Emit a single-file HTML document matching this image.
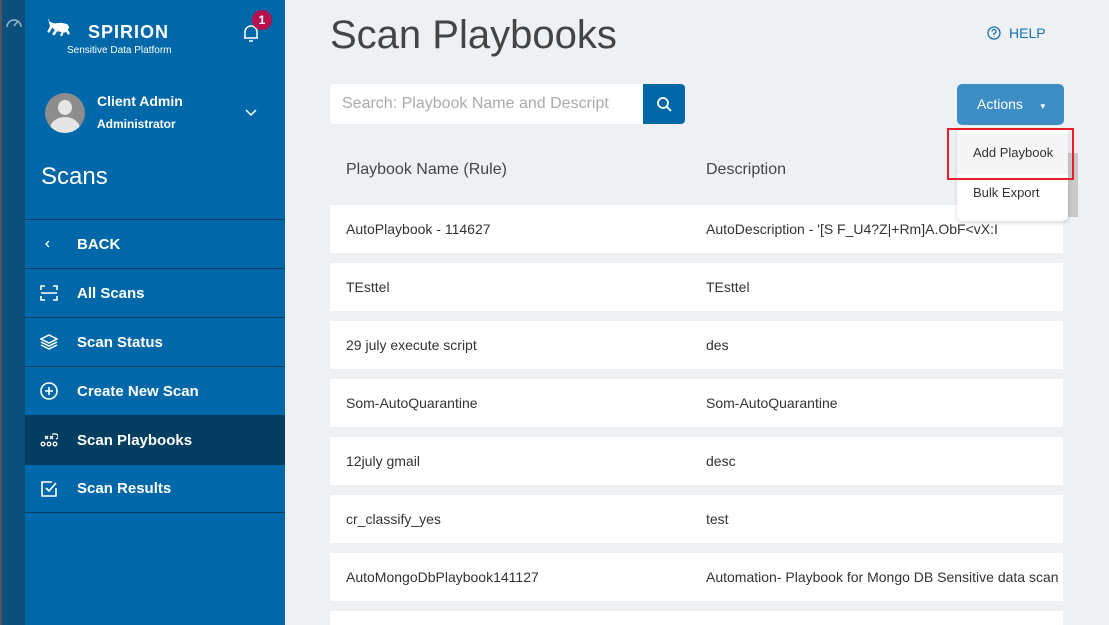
<!DOCTYPE html>
<html style="width:1109px;height:625px;overflow:hidden"><head><style>
*{margin:0;padding:0;box-sizing:border-box}
body{width:1109px;height:625px;overflow:hidden;background:#eef1f4;font-family:"Liberation Sans",sans-serif;position:relative}
.strip{position:absolute;left:0;top:0;width:25px;height:625px;background:#0c4f7c;border-left:2px solid #555}
.side{position:absolute;left:25px;top:0;width:260px;height:625px;background:#0068a9;color:#fff}
.nav{position:absolute;left:0;width:260px;height:49px;border-top:1px solid #0a3f63;display:flex;align-items:center;font-size:15px;font-weight:bold}
.nav svg{position:absolute;left:15px}
.nav span{position:absolute;left:52px}
.row{position:absolute;left:330px;width:733px;height:48px;background:#fff;font-size:14px;color:#333;line-height:48px}
.row .a{position:absolute;left:16px}.row .b{position:absolute;left:376px;white-space:nowrap}
</style></head><body>
<div class="strip"><svg width="20" height="14" style="position:absolute;left:2px;top:15px" viewBox="0 0 20 14" fill="none" stroke="#9fb7c8" stroke-width="1.5"><path d="M3 12a7 7 0 1 1 14 0"/><path d="M10 11l4-5"/></svg></div>
<div class="side">
 <svg width="40" height="30" style="position:absolute;left:20px;top:12px" viewBox="0 0 56 30" fill="#fff"><path d="M4 2l3 6 6 2 10-1 8 2 3 4-2 4 3 5-3 2-2-4-4 1-2 5-3-1 2-5-6-1-4 6-3-2 4-6-4-3-4 7-3-1 4-8z"/></svg>
 <div style="position:absolute;left:63px;top:22px;font-size:18px;font-weight:bold;letter-spacing:1px">SPIRION</div>
 <div style="position:absolute;left:42px;top:45px;font-size:10px">Sensitive Data Platform</div>
 <svg width="18" height="20" style="position:absolute;left:217px;top:23px" viewBox="0 0 18 20" fill="none" stroke="#fff" stroke-width="1.5"><path d="M3 15V9a6 6 0 0 1 12 0v6H2h14M7 18h4"/></svg>
 <div style="position:absolute;left:227px;top:10px;width:20px;height:20px;border-radius:50%;background:#b5124d;font-size:12px;font-weight:bold;text-align:center;line-height:20px">1</div>
 <div style="position:absolute;left:20px;top:93px;width:40px;height:40px;border-radius:50%;background:#8d8d8d;overflow:hidden"><div style="position:absolute;left:13px;top:7px;width:14px;height:15px;border-radius:50%;background:#e6e6e6"></div><div style="position:absolute;left:5px;top:24px;width:30px;height:24px;border-radius:50%;background:#e6e6e6"></div></div>
 <div style="position:absolute;left:72px;top:93px;font-size:14px;font-weight:bold">Client Admin</div>
 <div style="position:absolute;left:72px;top:117px;font-size:12px;font-weight:bold">Administrator</div>
 <svg width="12" height="8" style="position:absolute;left:220px;top:109px" viewBox="0 0 12 8" fill="none" stroke="#fff" stroke-width="1.5"><path d="M1 1l5 5 5-5"/></svg>
 <div style="position:absolute;left:16px;top:163px;font-size:24px">Scans</div>
 <div class="nav" style="top:219px"><svg width="10" height="10" style="left:18px" viewBox="0 0 10 10" fill="none" stroke="#fff" stroke-width="1.3"><path d="M6 2L3 5l3 3"/></svg><span>BACK</span></div>
 <div class="nav" style="top:268px"><svg width="18" height="16" viewBox="0 0 18 16" fill="none" stroke="#fff" stroke-width="1.6"><path d="M1 5V1h4M13 1h4v4M1 11v4h4M13 15h4v-4M1 8h16"/></svg><span>All Scans</span></div>
 <div class="nav" style="top:317px"><svg width="18" height="16" viewBox="0 0 18 16" fill="none" stroke="#fff" stroke-width="1.5"><path d="M9 1l8 4-8 4-8-4zM1 8l8 4 8-4M1 11l8 4 8-4"/></svg><span>Scan Status</span></div>
 <div class="nav" style="top:366px"><svg width="18" height="18" viewBox="0 0 18 18" fill="none" stroke="#fff" stroke-width="1.6"><circle cx="9" cy="9" r="8"/><path d="M9 5v8M5 9h8"/></svg><span>Create New Scan</span></div>
 <div class="nav" style="top:415px;background:#033d60"><svg width="18" height="14" viewBox="0 0 18 14" fill="none" stroke="#fff" stroke-width="1.3"><circle cx="3" cy="11" r="1.8"/><circle cx="9" cy="11" r="1.8"/><circle cx="15" cy="11" r="1.8"/><path d="M5 3l3 3M8 3L5 6M10 3l3 3M13 3l-3 3M12 1h3a2 2 0 0 1 1 5"/></svg><span>Scan Playbooks</span></div>
 <div class="nav" style="top:464px;border-bottom:1px solid #0a3f63"><svg width="18" height="18" viewBox="0 0 18 18" fill="none" stroke="#fff" stroke-width="1.6"><path d="M16 8v8H2V2h10"/><path d="M6 8l3 3 7-8"/></svg><span>Scan Results</span></div>
</div>
<div style="position:absolute;left:330px;top:13px;font-size:40px;color:#444">Scan Playbooks</div>
<svg width="14" height="14" style="position:absolute;left:987px;top:26px" viewBox="0 0 14 14" fill="none" stroke="#1a6fb0" stroke-width="1.3"><circle cx="7" cy="7" r="6"/><path d="M5 5.5a2 2 0 1 1 2 2v1.5M7 10.5v.5"/></svg>
<div style="position:absolute;left:1009px;top:25px;font-size:14px;color:#1a6fb0">HELP</div>
<div style="position:absolute;left:330px;top:84px;width:313px;height:40px;background:#fff;border-radius:4px 0 0 4px;font-size:16px;color:#aaa;line-height:40px;padding-left:12px;white-space:nowrap;overflow:hidden">Search: Playbook Name and Descript</div>
<div style="position:absolute;left:643px;top:84px;width:42px;height:40px;background:#0068a9;border-radius:0 4px 4px 0"><svg width="16" height="16" style="position:absolute;left:13px;top:12px" viewBox="0 0 16 16" fill="none" stroke="#fff" stroke-width="1.8"><circle cx="7" cy="7" r="5"/><path d="M11 11l4 4"/></svg></div>
<div style="position:absolute;left:957px;top:84px;width:107px;height:41px;background:#3d8ec4;border-radius:5px;color:#fff;font-size:14px;line-height:41px;padding-left:20px">Actions <span style="font-size:8px;margin-left:12px">▼</span></div>
<div style="position:absolute;left:346px;top:161px;font-size:16px;color:#444">Playbook Name (Rule)</div>
<div style="position:absolute;left:706px;top:161px;font-size:16px;color:#444">Description</div>
<div class="row" style="top:205px"><span class="a">AutoPlaybook - 114627</span><span class="b">AutoDescription - '[S F_U4?Z|+Rm]A.ObF&lt;vX:I</span></div>
<div class="row" style="top:263px"><span class="a">TEsttel</span><span class="b">TEsttel</span></div>
<div class="row" style="top:321px"><span class="a">29 july execute script</span><span class="b">des</span></div>
<div class="row" style="top:379px"><span class="a">Som-AutoQuarantine</span><span class="b">Som-AutoQuarantine</span></div>
<div class="row" style="top:437px"><span class="a">12july gmail</span><span class="b">desc</span></div>
<div class="row" style="top:495px"><span class="a">cr_classify_yes</span><span class="b">test</span></div>
<div class="row" style="top:553px"><span class="a">AutoMongoDbPlaybook141127</span><span class="b">Automation- Playbook for Mongo DB Sensitive data scan</span></div>
<div class="row" style="top:611px;height:14px"></div>
<div style="position:absolute;left:1068px;top:153px;width:10px;height:64px;background:#c8c8c8"></div>
<div style="position:absolute;left:957px;top:130px;width:111px;height:91px;background:#fff;border-radius:0 0 6px 6px;box-shadow:0 2px 4px rgba(0,0,0,.15)">
 <div style="position:absolute;left:0;top:4px;width:111px;height:40px;background:#f5f5f5"></div>
 <div style="position:absolute;left:16px;top:15px;font-size:13px;color:#333">Add Playbook</div>
 <div style="position:absolute;left:16px;top:55px;font-size:13px;color:#333">Bulk Export</div>
</div>
<div style="position:absolute;left:947px;top:128px;width:127px;height:52px;border:2px solid #e5202a"></div>
</body></html>
